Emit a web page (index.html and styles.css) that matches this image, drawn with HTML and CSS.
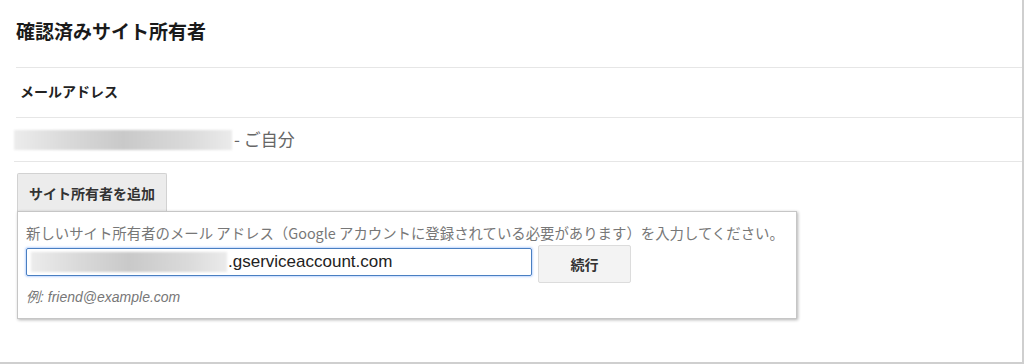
FILE: index.html
```html
<!DOCTYPE html>
<html lang="ja">
<head>
    <meta charset="UTF-8">
    <meta name="viewport" content="width=device-width, initial-scale=1.0">
    <title>確認済みサイト所有者</title>
    <link rel="stylesheet" href="styles.css">
</head>
<body>
    <div class="page">
        <h1 class="title">確認済みサイト所有者</h1>

        <div class="row row-head">メールアドレス</div>
        <div class="row row-owner">
            <span class="blur blur-owner"></span>
            <span class="owner-note">- ご自分</span>
        </div>

        <div class="add-owner">
            <button class="tab-button">サイト所有者を追加</button>
            <div class="panel">
                <p class="panel-text">新しいサイト所有者のメール アドレス（Google アカウントに登録されている必要があります）を入力してください。</p>
                <div class="panel-form">
                    <div class="field">
                        <span class="blur blur-field"></span>
                        <span class="field-text">.gserviceaccount.com</span>
                    </div>
                    <button class="continue-button">続行</button>
                </div>
                <p class="panel-example">例: friend@example.com</p>
            </div>
        </div>
    </div>
</body>
</html>
```

FILE: styles.css
```css
* {
    margin: 0;
    padding: 0;
    box-sizing: border-box;
}
body {
    font-family: "Noto Sans CJK JP", "Liberation Sans", sans-serif;
    background-color: #fff;
    color: #222;
}
.page {
    width: 1024px;
    height: 364px;
    padding-left: 16px;
    border-right: 2px solid #cfcfcf;
    border-bottom: 2px solid #cfcfcf;
    overflow: hidden;
}
.title {
    height: 68px;
    padding-top: 18px;
    font-size: 19px;
    line-height: 26px;
    font-weight: bold;
    color: #1a1a1a;
    border-bottom: 1px solid #e6e6e6;
}
.row {
    display: flex;
    align-items: center;
    border-bottom: 1px solid #e6e6e6;
}
.row-head {
    height: 50px;
    padding: 0 0 4px 4px;
    font-size: 14px;
    font-weight: bold;
    color: #222;
}
.row-owner {
    height: 44px;
    margin-left: -2px;
    padding-bottom: 3px;
}
.blur {
    display: inline-block;
    background: linear-gradient(90deg, #ececec 0%, #d9d9d9 25%, #c9c9c9 50%, #dadada 80%, #ebebeb 100%);
    filter: blur(1px);
}
.blur-owner {
    width: 218px;
    height: 20px;
    margin-top: 3px;
}
.owner-note {
    padding-left: 2px;
    font-size: 17px;
    color: #666;
}
.add-owner {
    margin-top: 11px;
    margin-left: 1px;
}
.tab-button {
    display: block;
    height: 38px;
    padding: 0 11px;
    font-family: inherit;
    font-size: 14px;
    font-weight: bold;
    color: #333;
    background-color: #ececec;
    border: 1px solid #d2d2d2;
    border-bottom: none;
    border-radius: 2px 2px 0 0;
}
.panel {
    width: 780px;
    height: 108px;
    padding: 11px 0 0 8px;
    border: 1px solid #c6c6c6;
    box-shadow: 1px 1px 3px rgba(0, 0, 0, 0.3);
}
.panel-text {
    font-size: 14.4px;
    line-height: 20px;
    color: #777;
    white-space: nowrap;
}
.panel-form {
    display: flex;
    align-items: flex-start;
    gap: 6px;
    margin-top: 2px;
}
.field {
    display: flex;
    align-items: center;
    width: 506px;
    height: 28px;
    margin-top: 3px;
    padding-left: 4px;
    border: 1px solid #4a7fc1;
    border-radius: 2px;
    box-shadow: 0 0 2px 1px rgba(77, 144, 254, 0.35);
}
.blur-field {
    width: 196px;
    height: 20px;
}
.field-text {
    padding-left: 1px;
    font-family: "Liberation Sans", Arial, sans-serif;
    font-size: 17px;
    color: #222;
}
.continue-button {
    width: 93px;
    height: 38px;
    font-family: inherit;
    font-size: 14px;
    font-weight: bold;
    color: #333;
    background-color: #f3f3f3;
    border: 1px solid #dcdcdc;
    border-radius: 2px;
}
.panel-example {
    margin-top: 6px;
    font-family: "Liberation Sans", "Noto Sans CJK JP", sans-serif;
    font-size: 14px;
    line-height: 16px;
    font-style: italic;
    color: #777;
}
```
